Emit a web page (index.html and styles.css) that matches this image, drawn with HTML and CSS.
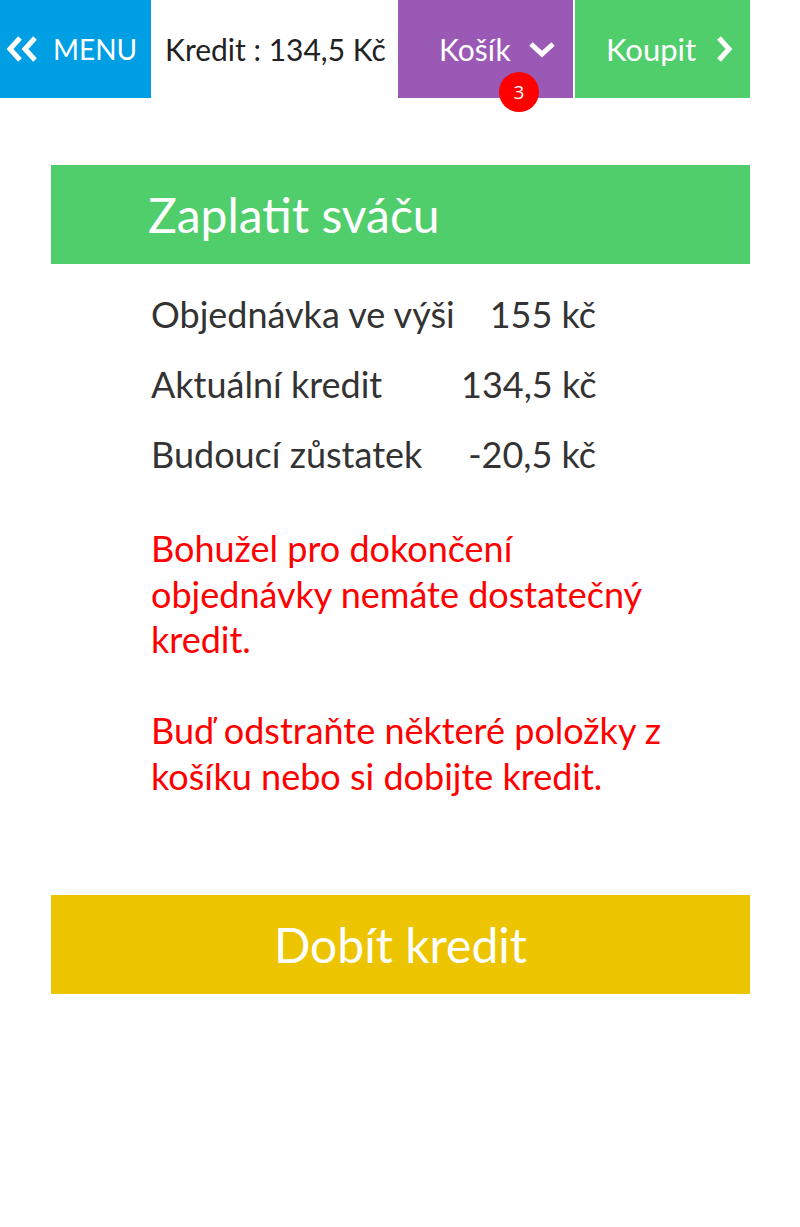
FILE: index.html
```html
<!DOCTYPE html>
<html lang="cs">
<head>
<meta charset="utf-8">
<title>Zaplatit sváču</title>
<link rel="stylesheet" href="styles.css">
</head>
<body>
<header class="topbar">
  <a class="tb-menu">
    <svg class="ico-dbl" width="34" height="28" viewBox="0 0 34 28"><polyline points="15,3 5,14 15,25" /><polyline points="30,3 20,14 30,25" /></svg>
    <span>MENU</span>
  </a>
  <div class="tb-credit">Kredit : 134,5 Kč</div>
  <a class="tb-cart">
    <span>Košík</span>
    <svg class="ico-down" width="28" height="18" viewBox="0 0 28 18"><polyline points="3,4 14,14 25,4" /></svg>
    <span class="badge">3</span>
  </a>
  <a class="tb-buy">
    <span>Koupit</span>
    <svg class="ico-right" width="18" height="28" viewBox="0 0 18 28"><polyline points="4,3 14,14 4,25" /></svg>
  </a>
</header>

<main class="content">
  <h1 class="title">Zaplatit sváču</h1>
  <div class="summary">
    <div class="label">Objednávka ve výši</div><div class="value">155 kč</div>
    <div class="label">Aktuální kredit</div><div class="value">134,5 kč</div>
    <div class="label">Budoucí zůstatek</div><div class="value">-20,5 kč</div>
  </div>
  <div class="warning">
    <p>Bohužel pro dokončení objednávky nemáte dostatečný kredit.</p>
    <p>Buď odstraňte některé položky z košíku nebo si dobijte kredit.</p>
  </div>
  <a class="topup">Dobít kredit</a>
</main>
</body>
</html>
```

FILE: styles.css
```css
* { box-sizing: border-box; }
html, body { margin: 0; padding: 0; background: #fff; }
body {
  font-family: "Lato", "Open Sans", "Liberation Sans", sans-serif;
  color: #333;
  width: 800px;
}
a { text-decoration: none; color: inherit; }

.topbar {
  display: flex;
  height: 98px;
  width: 750px;
}
.tb-menu {
  width: 151px;
  background: #009fe3;
  color: #fff;
  display: flex;
  align-items: center;
  padding-left: 5px;
  gap: 14px;
  font-size: 28px;
}
.tb-menu svg polyline, .tb-cart svg polyline, .tb-buy svg polyline {
  fill: none;
  stroke: #fff;
  stroke-width: 5;
}
.tb-credit {
  width: 247px;
  display: flex;
  align-items: center;
  padding-left: 14px;
  font-size: 30px;
  color: #222;
  white-space: nowrap;
}
.tb-cart {
  position: relative;
  width: 175px;
  background: #9b59b6;
  color: #fff;
  display: flex;
  align-items: center;
  padding-left: 41px;
  gap: 17px;
  font-size: 30px;
  margin-right: 2px;
}
.badge {
  position: absolute;
  left: 101px;
  top: 72px;
  width: 40px;
  height: 40px;
  border-radius: 50%;
  background: #ff0000;
  color: #fff;
  font-size: 19px;
  display: flex;
  align-items: center;
  justify-content: center;
  font-family: "Open Sans", sans-serif;
}
.tb-buy {
  width: 175px;
  background: #51ce6c;
  color: #fff;
  display: flex;
  align-items: center;
  padding-left: 31px;
  gap: 19px;
  font-size: 31px;
}

.content {
  margin: 67px 0 0 51px;
  width: 699px;
}
.title {
  margin: 0;
  height: 99px;
  background: #51ce6c;
  color: #fff;
  font-weight: 400;
  font-size: 48px;
  display: flex;
  align-items: center;
  padding-left: 97px;
}
.summary {
  display: grid;
  grid-template-columns: 310px 135px;
  row-gap: 26px;
  padding: 28px 0 0 100px;
  font-size: 36px;
  line-height: 44px;
  color: #333;
}
.value { text-align: right; white-space: nowrap; }
.warning {
  padding: 50px 80px 0 100px;
  color: #ff0000;
  font-size: 36px;
  line-height: 45.5px;
}
.warning p { margin: 0 0 45.5px; }
.warning p:last-child { margin-bottom: 0; }
.topup {
  display: flex;
  justify-content: center;
  align-items: center;
  height: 99px;
  margin-top: 96px;
  background: #ecc500;
  color: #fff;
  font-size: 48px;
}
```
